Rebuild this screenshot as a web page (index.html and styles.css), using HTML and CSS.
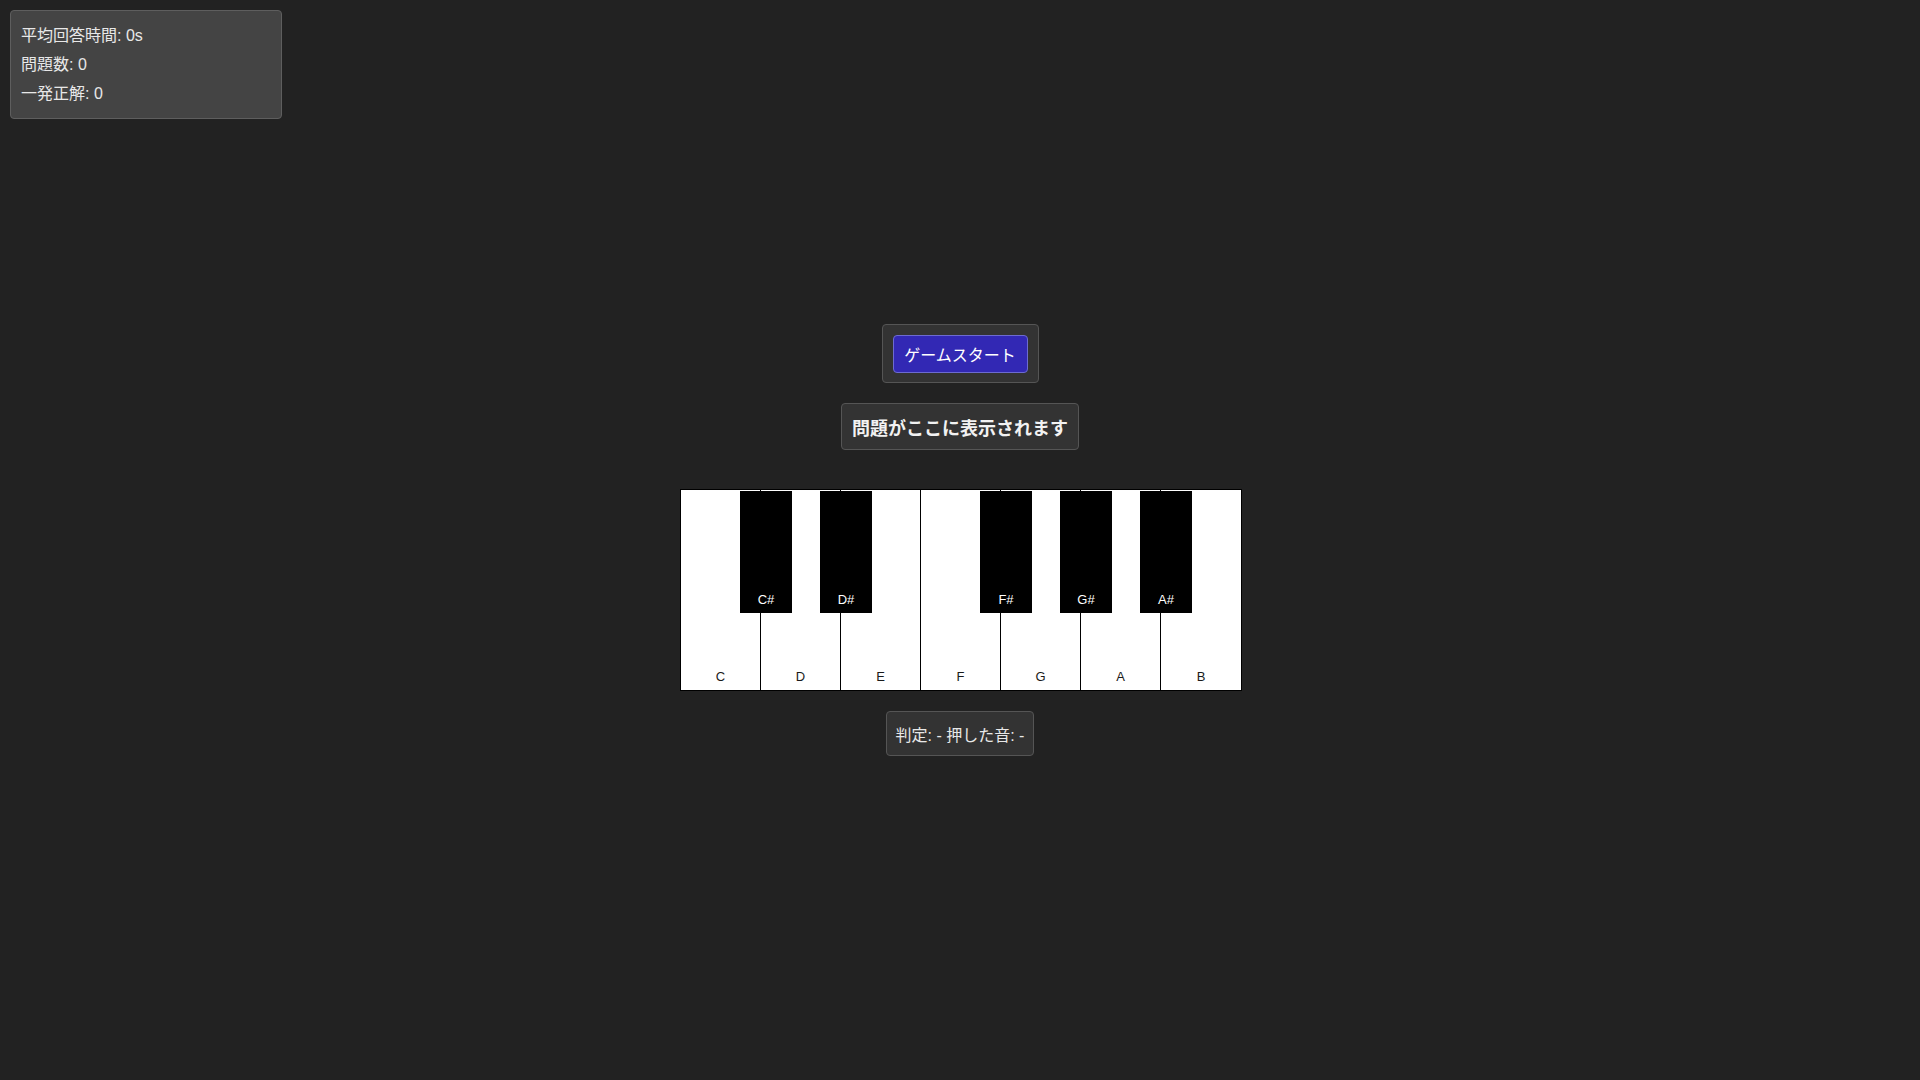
FILE: index.html
```html
<!DOCTYPE html>
<html lang="ja">
<head>
<meta charset="utf-8">
<title>Piano Quiz</title>
<link rel="stylesheet" href="styles.css">
</head>
<body>
<div class="stats">
  <div class="stat">平均回答時間: 0s</div>
  <div class="stat">問題数: 0</div>
  <div class="stat">一発正解: 0</div>
</div>
<main class="game">
  <div class="controls">
    <button class="start-btn">ゲームスタート</button>
  </div>
  <div class="question">問題がここに表示されます</div>
  <div class="piano">
    <div class="white-key"><span class="label">C</span></div>
    <div class="white-key"><span class="label">D</span></div>
    <div class="white-key"><span class="label">E</span></div>
    <div class="white-key"><span class="label">F</span></div>
    <div class="white-key"><span class="label">G</span></div>
    <div class="white-key"><span class="label">A</span></div>
    <div class="white-key"><span class="label">B</span></div>
    <div class="black-key bk-cs"><span class="label">C#</span></div>
    <div class="black-key bk-ds"><span class="label">D#</span></div>
    <div class="black-key bk-fs"><span class="label">F#</span></div>
    <div class="black-key bk-gs"><span class="label">G#</span></div>
    <div class="black-key bk-as"><span class="label">A#</span></div>
  </div>
  <div class="result">判定: - 押した音: -</div>
</main>
</body>
</html>
```

FILE: styles.css
```css
* { box-sizing: border-box; }
html, body { margin: 0; padding: 0; }
body {
  background: #222222;
  color: #e6e6e6;
  font-family: "Liberation Sans", "Noto Sans CJK JP", sans-serif;
  font-size: 16px;
  height: 100vh;
  overflow: hidden;
}
.stats {
  position: absolute;
  top: 10px;
  left: 10px;
  width: 272px;
  height: 109px;
  padding: 12px 10px 10px 10px;
  background: #444444;
  border: 1px solid #5e5e5e;
  border-radius: 4px;
  font-size: 16px;
  color: #e8e8e8;
}
.stat {
  height: 29px;
  line-height: 26px;
}
.game {
  height: 100vh;
  display: flex;
  flex-direction: column;
  align-items: center;
  justify-content: center;
}
.controls {
  width: 157px;
  height: 59px;
  padding: 10px;
  background: #333333;
  border: 1px solid #555555;
  border-radius: 4px;
  display: flex;
  align-items: center;
  justify-content: center;
}
.start-btn {
  width: 136px;
  height: 38px;
  background: #3228b4;
  color: #ffffff;
  border: 1px solid #6d6bd0;
  border-radius: 4px;
  font-family: inherit;
  font-size: 16px;
  padding: 0;
  cursor: pointer;
}
.question {
  margin-top: 20px;
  width: 238px;
  height: 47px;
  background: #333333;
  border: 1px solid #555555;
  border-radius: 4px;
  font-size: 18px;
  font-weight: bold;
  color: #f2f2f2;
  display: flex;
  align-items: center;
  justify-content: center;
}
.piano {
  margin-top: 39px;
  margin-left: 2px;
  position: relative;
  display: flex;
  width: 562px;
  height: 202px;
  border: 1px solid #000000;
  background: #ffffff;
}
.white-key {
  width: 80px;
  height: 200px;
  background: #ffffff;
  border-right: 1px solid #000000;
  display: flex;
  align-items: flex-end;
  justify-content: center;
  padding-bottom: 5px;
}
.white-key:nth-child(7) { border-right: none; }
.white-key .label {
  color: #1a1a1a;
  font-size: 13px;
  line-height: 16px;
}
.black-key {
  position: absolute;
  top: 1px;
  width: 52px;
  height: 122px;
  background: #000000;
  display: flex;
  align-items: flex-end;
  justify-content: center;
  padding-bottom: 5px;
  z-index: 2;
}
.black-key .label {
  color: #ffffff;
  font-size: 13px;
  line-height: 16px;
}
.bk-cs { left: 59px; }
.bk-ds { left: 139px; }
.bk-fs { left: 299px; }
.bk-gs { left: 379px; }
.bk-as { left: 459px; }
.result {
  margin-top: 20px;
  width: 148px;
  height: 45px;
  background: #333333;
  border: 1px solid #555555;
  border-radius: 4px;
  font-size: 16px;
  color: #e8e8e8;
  display: flex;
  align-items: center;
  justify-content: center;
}
```
